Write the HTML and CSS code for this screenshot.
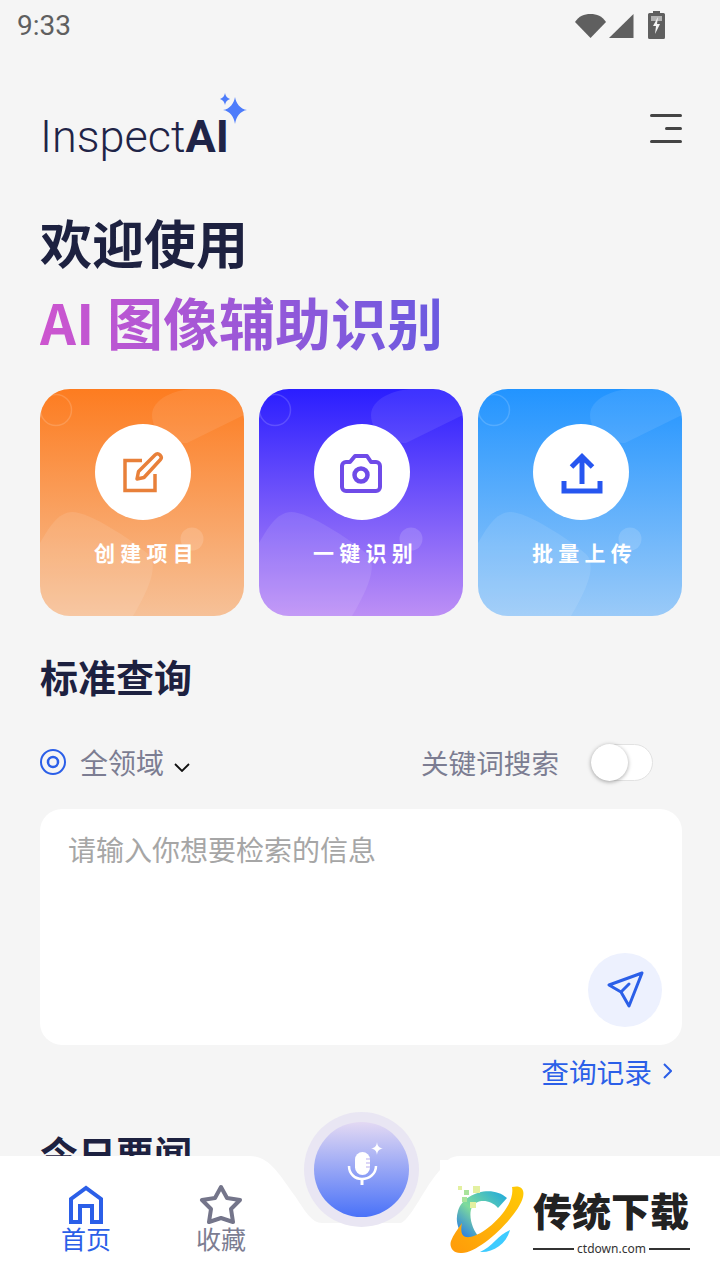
FILE: index.html
```html
<!DOCTYPE html>
<html>
<head>
  <meta charset="utf-8" />
  <title>InspectAI</title>
  <meta name="viewport" content="width=device-width, initial-scale=1">
  <link rel="stylesheet" href="styles.css">
</head>
<body>
  <svg width="0" height="0" class="defs">
    <symbol id="deco" viewBox="0 0 204 227">
      <path d="M112 26C112 10 135 0 155 0H176C192 0 204 12 204 26L147 54C130 54 112 44 112 26Z" fill="#fff" fill-opacity=".09"/>
      <path d="M0 154C8 140 18 123 32 123C50 123 90 150 108 165C118 175 112 195 93 227H30C10 227 0 215 0 200Z" fill="#fff" fill-opacity=".1"/>
      <circle cx="152" cy="150" r="11.5" fill="#fff" fill-opacity=".15"/>
      <circle cx="16" cy="21" r="15.5" fill="none" stroke="#fff" stroke-opacity=".16" stroke-width="1.5"/>
    </symbol>
  </svg>

  <div class="status">
    <span class="time">9:33</span>
    <div class="status-icons">
      <svg width="31" height="25" viewBox="0 0 31 25"><path d="M0 9C4 3 9 1 15.5 1S27 3 31 9L15.5 25Z" fill="#5f5f5f"/></svg>
      <svg width="25" height="25" viewBox="0 0 25 25"><path d="M24.500 1V25H0Z" fill="#5f5f5f"/></svg>
      <svg class="battery" width="17" height="28" viewBox="0 0 17 28"><path d="M5 0H12V2H15.500Q17 2 17 3.500V26.500Q17 28 15.500 28H1.500Q0 28 0 26.500V3.500Q0 2 1.500 2H5Z" fill="#5f5f5f"/><path d="M3 5H14V10H3Z" fill="#f5f5f5" fill-opacity=".55"/><path d="M10 6L5 15H8L7 23L12 13H9Z" fill="#f5f5f5"/></svg>
    </div>
  </div>

  <header class="top">
    <div class="logo">
      <span class="logo-text">Inspect<b>AI</b></span>
      <svg class="logo-star" width="28" height="32" viewBox="0 0 28 32">
        <path d="M15 4C16 10 20 16 27 17C20 18 16 24 15 31C14 24 10 18 3 17C10 16 14 10 15 4Z" fill="#4d7cfb"/>
        <path d="M5 0C5.500 3 7 5 10 6C7 7 5.500 9 5 12C4.500 9 3 7 0 6C3 5 4.500 3 5 0Z" fill="#4d7cfb"/>
      </svg>
    </div>
    <div class="menu"><i></i><i class="short"></i><i></i></div>
  </header>

  <main class="content">
    <h1 class="welcome">欢迎使用</h1>
    <h2 class="slogan">AI 图像辅助识别</h2>

    <div class="cards">
      <div class="card orange">
        <svg class="deco"><use href="#deco"/></svg>
        <div class="circle">
          <svg width="48" height="48" viewBox="0 0 48 48" fill="none" stroke="#e8803a" stroke-width="3.500">
            <path d="M23 12.500H6V42.500H36V26"/>
            <path d="M18 31L19.500 23.500L36 7Q38.500 4.500 41 7Q43.500 9.500 41.500 11.500L25 29.500Z" stroke-linejoin="round"/>
          </svg>
        </div>
        <span class="card-label">创建项目</span>
      </div>
      <div class="card purple">
        <svg class="deco"><use href="#deco"/></svg>
        <div class="circle">
          <svg width="48" height="48" viewBox="1 0 48 48" fill="none" stroke="#6f4be8" stroke-width="4">
            <path d="M9 14H13L18 8H30L34 14H39A4 4 0 0 1 43 18V39A4 4 0 0 1 39 43H9A4 4 0 0 1 5 39V18A4 4 0 0 1 9 14Z" stroke-linejoin="round"/>
            <circle cx="24" cy="27" r="6.500" stroke-width="4.500"/>
          </svg>
        </div>
        <span class="card-label">一键识别</span>
      </div>
      <div class="card blue">
        <svg class="deco"><use href="#deco"/></svg>
        <div class="circle">
          <svg width="48" height="48" viewBox="0 0 48 48" fill="none" stroke="#2656f0" stroke-width="5">
            <path d="M7 33V43H43V33"/>
            <path d="M25 36V9M14.500 19L25 8.500L35.500 19"/>
          </svg>
        </div>
        <span class="card-label">批量上传</span>
      </div>
    </div>

    <h3 class="section-title">标准查询</h3>

    <div class="filters">
      <div class="scope">
        <svg width="26" height="26" viewBox="0 0 26 26" fill="none" stroke="#2b5fe8" stroke-width="2"><circle cx="13" cy="13" r="12"/><circle cx="13" cy="13" r="5" stroke-width="2.500"/></svg>
        <span>全领域</span>
        <svg class="chev" width="16" height="9" viewBox="0 0 16 9" fill="none" stroke="#111" stroke-width="1.800"><path d="M1 1L8 8L15 1"/></svg>
      </div>
      <div class="keyword">
        <span>关键词搜索</span>
        <div class="toggle"><i></i></div>
      </div>
    </div>

    <div class="query">
      <span class="placeholder">请输入你想要检索的信息</span>
      <div class="send">
        <svg width="74" height="74" viewBox="0 0 74 74" fill="none" stroke="#2b5fe8" stroke-width="3" stroke-linejoin="round" stroke-linecap="round"><path d="M54 20L21 32L33 39L41 53ZM33 39L41 31"/></svg>
      </div>
    </div>

    <div class="history">
      <span>查询记录</span>
      <svg width="9" height="16" viewBox="0 0 9 16" fill="none" stroke="#2b5fe8" stroke-width="2"><path d="M1 1L8 8L1 15"/></svg>
    </div>

    <h3 class="section-title news">今日要闻</h3>
  </main>

  <nav class="tabbar">
    <svg class="tabbar-bg" width="720" height="124" viewBox="0 0 720 124"><path d="M0 0H250C270 0 280 20 295 40C305 55 312 67 322 67H401C412 62 425 30 440 14C445 5 450 0 460 0H720V124H0Z" fill="#fff"/></svg>
    <div class="tab active">
      <svg width="36" height="40" viewBox="0 0 36 40" fill="none" stroke="#2b5fe8" stroke-width="4"><path d="M3 38V15L18 4L33 15V38H24V22H12V38Z"/></svg>
      <span>首页</span>
    </div>
    <div class="tab">
      <svg width="44" height="40" viewBox="0 0 44 40" fill="none" stroke="#74758a" stroke-width="4" stroke-linejoin="round"><path d="M22 3L28 14L41 16L32 25L34 38L22 34L10 38L12 25L3 16L16 14Z"/></svg>
      <span>收藏</span>
    </div>
    <div class="mic-ring">
      <div class="mic">
        <svg width="95" height="95" viewBox="0 0 95 95" fill="none">
          <rect x="41" y="30" width="15" height="23" rx="7.500" fill="#fff"/>
          <path d="M52 37H56M52 41H56M52 45H56" stroke="#b7aef0" stroke-width="1.200"/>
          <path d="M35 44C35 52 41 57 48 57S62 52 62 44" stroke="#fff" stroke-width="2.500"/>
          <path d="M48 57V63" stroke="#fff" stroke-width="3"/>
          <path d="M63 20C63.500 24 65 26 69 26.500C65 27 63.500 29 63 33C62.500 29 61 27 57 26.500C61 26 62.500 24 63 20Z" fill="#fff"/>
        </svg>
      </div>
    </div>
    <div class="mark">
      <svg width="75" height="70" viewBox="0 0 75 70">
        <defs>
          <linearGradient id="cg" x1="1" y1="0" x2="0" y2="1">
            <stop offset="0" stop-color="#1aa7e0"/><stop offset=".55" stop-color="#7fdc9a"/><stop offset="1" stop-color="#1c6cf0"/>
          </linearGradient>
          <linearGradient id="og" x1="1" y1="0" x2="0" y2="1">
            <stop offset="0" stop-color="#ffcb05"/><stop offset="1" stop-color="#ff9a0a"/>
          </linearGradient>
        </defs>
        <path d="M57 13L48 23C40 14 27 14 22 22C18 30 22 45 30 53L14 53C8 44 5 36 8 26C13 8 42 -1 57 13Z" fill="url(#cg)"/>
        <path d="M62 2C70 0 75 3 73 12C69 30 30 68 12 68C3 69 -1 62 1 56C3 50 8 44 12 38C10 48 12 53 20 52C35 50 66 22 62 2Z" fill="url(#og)"/>
        <path d="M60 45C56 60 42 68 30 67C42 62 48 50 60 45Z" fill="#3dcbff"/>
        <g fill="#e3f0a0">
          <rect x="8" y="1" width="4" height="4"/><rect x="14" y="5" width="5" height="5" fill="#a8e39c"/><rect x="23" y="1" width="7" height="7"/><rect x="12" y="12" width="5" height="5" fill="#a8e39c"/><rect x="20" y="17" width="6" height="6"/>
        </g>
      </svg>
      <div class="mark-text">
        <strong>传统下载</strong>
        <div class="mark-url"><i></i><span>ctdown.com</span><i></i></div>
      </div>
    </div>
  </nav>
</body>
</html>
```

FILE: styles.css
```css
* {
  box-sizing: border-box;
}

html, body {
  margin: 0;
  height: 1280px;
  overflow: hidden;
}

body {
  position: relative;
  background: #f5f5f5;
  font-family: "Noto Sans CJK SC", "Noto Sans", sans-serif;
  color: #1d2140;
}

.defs {
  position: absolute;
}

.status {
  height: 50px;
  display: flex;
  justify-content: space-between;
  align-items: center;
  padding: 0 55px 0 17px;
}

.time {
  font-family: Roboto, sans-serif;
  font-size: 28px;
  color: #5f5f5f;
}

.status-icons {
  display: flex;
  align-items: center;
  gap: 3px;
}

.battery {
  margin-left: 11px;
}

.top {
  height: 140px;
  display: flex;
  justify-content: space-between;
  align-items: center;
  padding: 30px 38px 0 40px;
}

.logo {
  position: relative;
  margin-top: 4px;
}

.logo-text {
  font-family: Roboto, sans-serif;
  font-weight: 300;
  font-size: 45px;
  line-height: 56px;
  color: #1f2447;
}

.logo-text b {
  font-weight: 700;
}

.logo-star {
  position: absolute;
  left: 180px;
  top: -16px;
}

.menu {
  width: 32px;
  display: flex;
  flex-direction: column;
  align-items: flex-end;
  gap: 10px;
  margin-top: -14px;
}

.menu i {
  display: block;
  width: 100%;
  height: 3px;
  border-radius: 2px;
  background: #444;
}

.menu i.short {
  width: 17px;
}

.content {
  padding: 0 38px 0 40px;
}

.welcome {
  margin: 17px 0 0;
  font-size: 52px;
  line-height: 70px;
  font-weight: 700;
}

.slogan {
  margin: 8px 0 0;
  width: 402px;
  font-size: 56px;
  line-height: 72px;
  font-weight: 700;
  white-space: nowrap;
  background: linear-gradient(90deg, #cd55cf, #6a5ae0);
  -webkit-background-clip: text;
  background-clip: text;
  color: transparent;
}

.cards {
  margin-top: 32px;
  display: flex;
  gap: 15px;
}

.card {
  position: relative;
  overflow: hidden;
  width: 204px;
  height: 227px;
  border-radius: 30px;
  display: flex;
  flex-direction: column;
  align-items: center;
  padding-top: 35px;
}

.orange {
  background: linear-gradient(180deg, #fd7c20, #f6c198);
}

.purple {
  background: linear-gradient(180deg, #2a1eff, #bd8ff5);
}

.blue {
  background: linear-gradient(180deg, #2294ff, #9acaf8);
}

.deco {
  position: absolute;
  left: 0;
  top: 0;
  width: 100%;
  height: 100%;
}

.circle {
  position: relative;
  width: 96px;
  height: 96px;
  margin-left: 2px;
  border-radius: 50%;
  background: #fff;
  display: flex;
  align-items: center;
  justify-content: center;
}

.card-label {
  position: relative;
  margin-top: 16px;
  padding-left: 9px;
  font-size: 21px;
  line-height: 32px;
  font-weight: 700;
  letter-spacing: 5.300px;
  color: #fff;
}

.section-title {
  margin: 34px 0 0;
  font-size: 38px;
  line-height: 52px;
  font-weight: 700;
}

.filters {
  margin-top: 40px;
  height: 40px;
  display: flex;
  justify-content: space-between;
  align-items: center;
  font-size: 28px;
  color: #7c7d92;
}

.scope, .keyword {
  display: flex;
  align-items: center;
}

.scope span {
  margin-left: 14px;
}

.keyword span {
  font-size: 27.600px;
}

.chev {
  margin: 11px 0 0 10px;
}

.toggle {
  width: 62px;
  height: 37px;
  margin: 0 29px 0 32px;
  border: 1px solid #e2e2e2;
  border-radius: 19px;
  background: #fff;
}

.toggle i {
  display: block;
  width: 37px;
  height: 37px;
  margin: -1px;
  border-radius: 50%;
  background: #fff;
  box-shadow: 0 1px 4px rgba(0, 0, 0, .35);
}

.query {
  position: relative;
  margin-top: 27px;
  height: 236px;
  padding: 20px 28px;
  border-radius: 22px;
  background: #fff;
}

.placeholder {
  font-size: 28px;
  line-height: 40px;
  color: #a6a6a6;
  display: block;
}

.send {
  position: absolute;
  right: 20px;
  bottom: 18px;
  width: 74px;
  height: 74px;
  border-radius: 50%;
  background: #edf1fe;
}

.history {
  margin-top: 6px;
  height: 40px;
  display: flex;
  justify-content: flex-end;
  align-items: center;
  gap: 11px;
  padding-right: 10px;
  font-size: 27.700px;
  color: #2b5fe8;
}

.news {
  margin-top: 36px;
}

.tabbar {
  position: absolute;
  left: 0;
  bottom: 0;
  width: 720px;
  height: 124px;
  display: flex;
  gap: 35px;
  padding: 28px 0 0 36px;
}

.tabbar-bg {
  position: absolute;
  left: 0;
  top: 0;
}

.tab {
  position: relative;
  width: 100px;
  display: flex;
  flex-direction: column;
  align-items: center;
  font-size: 25px;
  line-height: 28px;
  color: #7c7d92;
}

.tab svg {
  display: block;
}

.tab.active {
  color: #2b5fe8;
}

.mic-ring {
  position: absolute;
  left: 304px;
  top: -44px;
  width: 115px;
  height: 115px;
  padding: 10px;
  border-radius: 50%;
  background: #e9e6f3;
}

.mic {
  width: 95px;
  height: 95px;
  border-radius: 50%;
  background: linear-gradient(180deg, #e3d9f3, #4a72f8);
}

.mark {
  position: absolute;
  left: 440px;
  top: 4px;
  width: 280px;
  height: 120px;
  padding: 25px 0 0 10px;
  display: flex;
  gap: 8px;
  background: #fff;
}

.mark-text {
  width: 157px;
}

.mark-text strong {
  display: block;
  font-size: 39px;
  line-height: 56px;
  font-weight: 900;
  color: #222;
  white-space: nowrap;
  margin-top: -4px;
}

.mark-url {
  display: flex;
  align-items: center;
  gap: 3px;
  margin-top: 5px;
  font-family: "Noto Sans", sans-serif;
  font-size: 12px;
  line-height: 14px;
  color: #333;
}

.mark-url i {
  flex: 1;
  height: 2px;
  background: #333;
}
```
